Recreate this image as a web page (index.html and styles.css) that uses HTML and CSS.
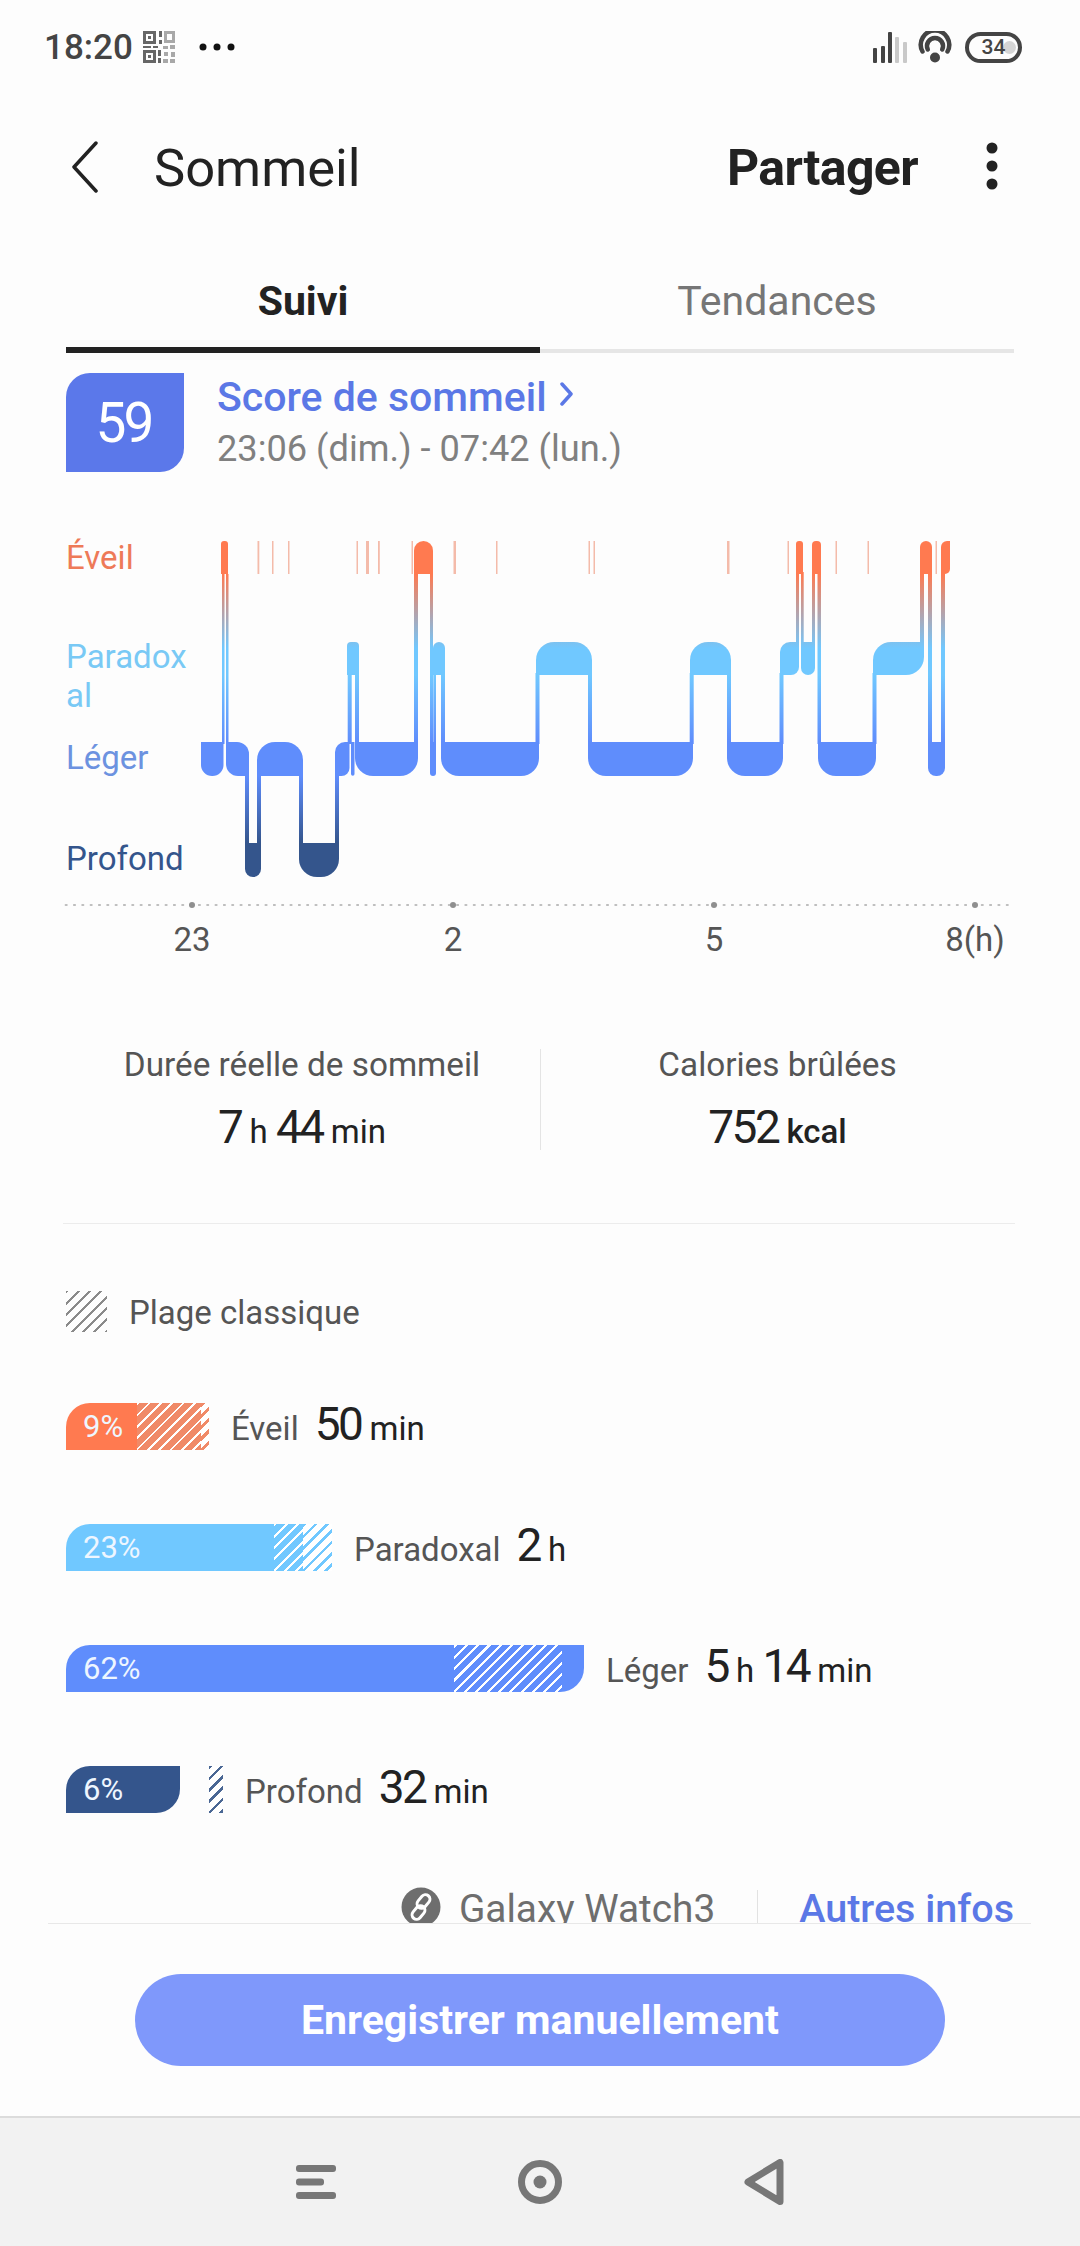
FILE: index.html
```html
<!DOCTYPE html>
<html lang="fr">
<head>
<meta charset="utf-8">
<title>Sommeil</title>
<link rel="stylesheet" href="styles.css">
</head>
<body>
<div class="app">
  <div class="status">
    <span class="time">18:20</span>
    <svg class="qr" viewBox="0 0 32 32" width="32" height="32">
      <g class="qr-dark">
        <path d="M0 0h13v13H0zM3 3v7h7V3zM5 5h3v3H5z" fill-rule="evenodd"/>
        <path d="M0 19h13v13H0zM3 22v7h7v-7zM5 24h3v3H5z" fill-rule="evenodd"/>
        <path d="M16 0h3v6h-3zM16 9h3v4h-3zM0 15h8v2H0zM10 15h5v2h-5zM15 19h3v6h-3zM15 27h3v5h-3z"/>
      </g>
      <g class="qr-light">
        <path d="M21 0h11v12H21zM24 3v6h5V3z" fill-rule="evenodd"/>
        <path d="M20 15h5v3h-5zM27 14h5v4h-5zM21 21h4v4h-4zM28 21h4v5h-4zM20 28h5v4h-5zM27 28h5v4h-5z"/>
      </g>
    </svg>
    <svg class="more" viewBox="0 0 36 8" width="36" height="8">
      <circle cx="4" cy="4" r="3.5"/><circle cx="18" cy="4" r="3.5"/><circle cx="32" cy="4" r="3.5"/>
    </svg>
    <span class="status-gap"></span>
    <svg class="signal" viewBox="0 0 34 31" width="34" height="31">
      <rect class="bar-on" x="0" y="16" width="4" height="15" rx="1"/>
      <rect class="bar-on" x="8" y="14" width="4" height="17" rx="1"/>
      <rect class="bar-on" x="15" y="0" width="4" height="31" rx="1"/>
      <rect class="bar-off" x="22" y="5" width="4" height="26" rx="1"/>
      <rect class="bar-off" x="30" y="10" width="4" height="21" rx="1"/>
    </svg>
    <svg class="wifi" viewBox="0 0 34 32" width="34" height="32">
      <path d="M4.500 20.500A14.200 14.200 0 1 1 29.500 20.500"/>
      <path d="M9.800 18.500A8 8 0 1 1 24.200 18.500"/>
      <circle cx="17" cy="26.500" r="5"/>
    </svg>
    <div class="battery"><span class="battery-level"></span><span class="battery-num">34</span></div>
  </div>

  <header class="appbar">
    <svg class="back" viewBox="0 0 26 52" width="26" height="52"><path d="M24 2 2 26l22 24"/></svg>
    <h1 class="title">Sommeil</h1>
    <span class="share">Partager</span>
    <svg class="kebab" viewBox="0 0 12 48" width="12" height="48">
      <circle cx="6" cy="6" r="5.500"/><circle cx="6" cy="24" r="5.500"/><circle cx="6" cy="42" r="5.500"/>
    </svg>
  </header>

  <nav class="tabs">
    <div class="tab tab-active">Suivi</div>
    <div class="tab">Tendances</div>
  </nav>

  <main class="content">
    <section class="score">
      <div class="badge">59</div>
      <div class="score-text">
        <div class="score-title">Score de sommeil
          <svg class="score-chev" viewBox="0 0 14 24" width="14" height="24"><path d="M3 2l9 10-9 10"/></svg>
        </div>
        <div class="score-time">23:06 (dim.) - 07:42 (lun.)</div>
      </div>
    </section>

    <section class="chart">
      <div class="levels">
        <div class="lv lv-wake">Éveil</div>
        <div class="lv lv-rem">Paradoxal</div>
        <div class="lv lv-light">Léger</div>
        <div class="lv lv-deep">Profond</div>
      </div>
      <svg class="hypno" viewBox="190 535 800 350" width="800" height="350">
        <defs>
          <linearGradient id="stage" gradientUnits="userSpaceOnUse" x1="0" y1="541" x2="0" y2="877">
            <stop offset="0" stop-color="#ff7a50"/>
            <stop offset=".098" stop-color="#ff7a50"/>
            <stop offset=".32" stop-color="#70c8ff"/>
            <stop offset=".399" stop-color="#70c8ff"/>
            <stop offset=".598" stop-color="#5f8dfc"/>
            <stop offset=".699" stop-color="#5f8dfc"/>
            <stop offset=".899" stop-color="#34558c"/>
            <stop offset="1" stop-color="#34558c"/>
          </linearGradient>
        </defs>
        <g class="faint">
          <rect x="257.500" y="541" width="1.800" height="33"/>
          <rect x="272" y="541" width="1.500" height="33"/>
          <rect x="288" y="541" width="1.500" height="33"/>
          <rect x="356.500" y="541" width="1.500" height="33"/>
          <rect x="366" y="541" width="3" height="33"/>
          <rect x="378" y="541" width="1.800" height="33"/>
          <rect x="411.500" y="541" width="1.500" height="33"/>
          <rect x="453.500" y="541" width="2.500" height="33"/>
          <rect x="496" y="541" width="1.500" height="33"/>
          <rect x="588.500" y="541" width="1.500" height="33"/>
          <rect x="593.500" y="541" width="1.500" height="33"/>
          <rect x="727" y="541" width="2.500" height="33"/>
          <rect x="787.500" y="541" width="1.500" height="33"/>
          <rect x="835.500" y="541" width="1.500" height="33"/>
          <rect x="867.500" y="541" width="1.500" height="33"/>
          <rect x="935.500" y="541" width="1.500" height="33"/>
        </g>
        <g class="stages">
          <!-- connectors -->
          <rect x="222" y="574" width="2.500" height="170"/>
          <rect x="226" y="574" width="2.500" height="170"/>
          <rect x="245" y="774" width="4" height="71"/>
          <rect x="257" y="774" width="4" height="71"/>
          <rect x="299" y="774" width="4" height="71"/>
          <rect x="335" y="774" width="4" height="71"/>
          <rect x="347.700" y="673" width="4" height="71"/>
          <rect x="355" y="673" width="4" height="71"/>
          <rect x="414" y="572" width="4" height="172"/>
          <rect x="430" y="572" width="3" height="172"/>
          <rect x="433.300" y="673" width="2.700" height="71"/>
          <rect x="441" y="673" width="4" height="71"/>
          <rect x="535.500" y="673" width="4" height="71"/>
          <rect x="588" y="673" width="4" height="71"/>
          <rect x="689.700" y="673" width="4" height="71"/>
          <rect x="727" y="673" width="4" height="71"/>
          <rect x="779.500" y="673" width="4" height="71"/>
          <rect x="796" y="572" width="3" height="72"/>
          <rect x="801" y="572" width="2.700" height="72"/>
          <rect x="812" y="572" width="3" height="72"/>
          <rect x="817.500" y="572" width="3.500" height="172"/>
          <rect x="872.500" y="673" width="4" height="71"/>
          <rect x="920" y="572" width="4" height="72"/>
          <rect x="928" y="572" width="4" height="172"/>
          <rect x="941" y="572" width="4" height="172"/>
          <!-- blocks -->
          <path d="M221 574V544A3 3 0 0 1 224 541H225A3 3 0 0 1 228 544V574Z"/>
          <path d="M201 742H223.500V765A11 11 0 0 1 212.500 776H212A11 11 0 0 1 201 765Z"/>
          <path d="M226 742H237A12 12 0 0 1 249 754V776H238A12 12 0 0 1 226 764Z"/>
          <path d="M245 843H261V869A8 8 0 0 1 253 877A8 8 0 0 1 245 869Z"/>
          <path d="M257 776V760A18 18 0 0 1 275 742H285A18 18 0 0 1 303 760V776Z"/>
          <path d="M299 843H339V859A18 18 0 0 1 321 877H317A18 18 0 0 1 299 859Z"/>
          <path d="M335 776V752A10 10 0 0 1 345 742H349.500V768A8 8 0 0 1 341.500 776Z"/>
          <path d="M351 742H354.500V774A1.750 1.750 0 0 1 351 774Z"/>
          <path d="M347 675V646A4 4 0 0 1 351 642H355A4 4 0 0 1 359 646V675Z"/>
          <path d="M355 742H418V758A18 18 0 0 1 400 776H373A18 18 0 0 1 355 758Z"/>
          <path d="M414 574V550.500A9.500 9.500 0 0 1 433 550.500V574Z"/>
          <path d="M430 742H436V773A3 3 0 0 1 430 773Z"/>
          <path d="M433 675V648A6 6 0 0 1 439 642A6 6 0 0 1 445 648V675Z"/>
          <path d="M441 742H539V758A18 18 0 0 1 521 776H459A18 18 0 0 1 441 758Z"/>
          <path d="M536 675V660A18 18 0 0 1 554 642H574A18 18 0 0 1 592 660V675Z"/>
          <path d="M588 742H693V758A18 18 0 0 1 675 776H606A18 18 0 0 1 588 758Z"/>
          <path d="M690 675V660A18 18 0 0 1 708 642H713A18 18 0 0 1 731 660V675Z"/>
          <path d="M727 742H783V758A18 18 0 0 1 765 776H745A18 18 0 0 1 727 758Z"/>
          <path d="M780 675V652A10 10 0 0 1 790 642H799V667A8 8 0 0 1 791 675Z"/>
          <path d="M796 574V544A3 3 0 0 1 799 541H800A3 3 0 0 1 803 544V574Z"/>
          <path d="M801 642H815V668A7 7 0 0 1 801 668Z"/>
          <path d="M812 574V545A4 4 0 0 1 816 541H817A4 4 0 0 1 821 545V574Z"/>
          <path d="M818 742H876V758A18 18 0 0 1 858 776H836A18 18 0 0 1 818 758Z"/>
          <path d="M873 675V660A18 18 0 0 1 891 642H924V657A18 18 0 0 1 906 675Z"/>
          <path d="M920 574V547A6 6 0 0 1 926 541A6 6 0 0 1 932 547V574Z"/>
          <path d="M928 742H945V768A8 8 0 0 1 937 776H936A8 8 0 0 1 928 768Z"/>
          <path d="M941 574V547A6 6 0 0 1 947 541H950V569A5 5 0 0 1 945 574Z"/>
        </g>
      </svg>
    </section>

    <div class="axis-line">
      <span class="tick"></span><span class="tick"></span><span class="tick"></span><span class="tick"></span>
    </div>
    <div class="axis-labels">
      <span>23</span><span>2</span><span>5</span><span>8(h)</span>
    </div>

    <section class="stats">
      <div class="stat">
        <div class="stat-label">Durée réelle de sommeil</div>
        <div class="stat-value"><span class="num">7</span> <span class="unit">h</span> <span class="num">44</span> <span class="unit">min</span></div>
      </div>
      <div class="stat-div"></div>
      <div class="stat">
        <div class="stat-label">Calories brûlées</div>
        <div class="stat-value"><span class="num">752</span> <span class="unit unit-strong">kcal</span></div>
      </div>
    </section>

    <div class="rule"></div>

    <div class="legend">
      <span class="swatch"></span>
      <span class="legend-text">Plage classique</span>
    </div>

    <div class="row row-wake">
      <div class="track track-wake">
        <div class="seg seg-fill seg-wake-solid">9%</div>
        <div class="seg seg-wake-over"></div>
        <div class="seg seg-wake-out"></div>
      </div>
      <div class="row-text"><span class="row-name">Éveil</span><span class="num">50</span> <span class="unit">min</span></div>
    </div>

    <div class="row">
      <div class="track track-rem">
        <div class="seg seg-fill seg-rem-solid">23%</div>
        <div class="seg seg-rem-over"></div>
        <div class="seg seg-rem-out"></div>
      </div>
      <div class="row-text"><span class="row-name">Paradoxal</span><span class="num">2</span> <span class="unit">h</span></div>
    </div>

    <div class="row">
      <div class="track track-light">
        <div class="seg seg-fill seg-light-solid">62%</div>
        <div class="seg seg-light-over"></div>
        <div class="seg seg-light-tail"></div>
      </div>
      <div class="row-text"><span class="row-name">Léger</span><span class="num">5</span> <span class="unit">h</span> <span class="num">14</span> <span class="unit">min</span></div>
    </div>

    <div class="row">
      <div class="track track-deep">
        <div class="seg seg-fill seg-deep-solid">6%</div>
      </div>
      <div class="deep-range"></div>
      <div class="row-text"><span class="row-name">Profond</span><span class="num">32</span> <span class="unit">min</span></div>
    </div>

    <div class="source">
      <svg class="link" viewBox="0 0 40 40" width="40" height="40">
        <circle class="link-bg" cx="20" cy="20" r="19.500"/>
        <g class="link-chain">
          <rect x="18" y="7" width="9" height="15" rx="4.500" transform="rotate(40 22.500 14.500)"/>
          <rect x="13" y="18" width="9" height="15" rx="4.500" transform="rotate(40 17.500 25.500)"/>
        </g>
      </svg>
      <span class="source-name">Galaxy Watch3</span>
      <span class="source-div"></span>
      <span class="source-more">Autres infos</span>
    </div>
  </main>
  <div class="clip-line"></div>

  <div class="action"><button class="manual">Enregistrer manuellement</button></div>

  <footer class="navbar">
    <svg viewBox="0 0 40 34" width="40" height="34" class="nav-icon">
      <rect x="0" y="0" width="40" height="7" rx="3"/>
      <rect x="0" y="13.500" width="28" height="7" rx="3"/>
      <rect x="0" y="27" width="40" height="7" rx="3"/>
    </svg>
    <svg viewBox="0 0 44 44" width="44" height="44" class="nav-icon">
      <circle class="nav-ring" cx="22" cy="22" r="18.500"/>
      <circle cx="22" cy="22" r="6.500"/>
    </svg>
    <svg viewBox="0 0 40 46" width="40" height="46" class="nav-icon">
      <path class="nav-ring" d="M36 3.500V42.500L4 23Z"/>
    </svg>
  </footer>
</div>
</body>
</html>
```

FILE: styles.css
```css
* { box-sizing: border-box; }
html, body { margin: 0; padding: 0; }
body {
  width: 1080px;
  height: 2246px;
  overflow: hidden;
  background: #fdfdfd;
  font-family: Roboto, "Liberation Sans", sans-serif;
  color: #222;
}
.app { display: flex; flex-direction: column; width: 1080px; height: 2246px; }

/* status bar */
.status {
  flex: none;
  height: 94px;
  display: flex;
  align-items: center;
  padding: 0 58px 0 44px;
}
.time { font-size: 35px; font-weight: 500; color: #444; }
.qr { margin-left: 10px; }
.qr-dark { fill: #666; }
.qr-light { fill: #a8a8a8; }
.more { margin-left: 24px; fill: #111; }
.status-gap { flex: 1; }
.signal { margin-right: 11px; }
.bar-on { fill: #444; }
.bar-off { fill: #c9c9c9; }
.wifi { margin-right: 13px; fill: #444; }
.wifi path { fill: none; stroke: #444; stroke-width: 4.500px; stroke-linecap: round; }
.battery {
  position: relative;
  width: 57px;
  height: 31px;
  border: 4px solid #444;
  border-radius: 16px;
  display: flex;
  align-items: center;
  justify-content: center;
}
.battery-level {
  position: absolute;
  left: 34px;
  top: 5px;
  width: 13px;
  height: 13px;
  border-radius: 50%;
  background: #d5d5d5;
}
.battery-num { position: relative; font-size: 21px; font-weight: 500; color: #444; }

/* app bar */
.appbar {
  flex: none;
  height: 148px;
  display: flex;
  align-items: center;
  padding: 0 82px 0 72px;
}
.back { margin-bottom: 3px; fill: none; stroke: #222; stroke-width: 3.500px; stroke-linecap: round; stroke-linejoin: round; }
.title { flex: 1; margin: 0 0 0 56px; font-size: 52.500px; font-weight: 400; color: #222; line-height: 60px; }
.share { font-size: 50px; font-weight: 700; letter-spacing: -.6px; color: #222; line-height: 60px; }
.kebab { margin: 0 0 4px 68px; fill: #222; }

/* tabs */
.tabs { flex: none; display: flex; margin: 0 66px; height: 111px; }
.tab {
  flex: 1;
  height: 111px;
  padding-top: 35px;
  text-align: center;
  font-size: 41px;
  line-height: 48px;
  color: #767676;
  border-bottom: 4px solid #e6e6e6;
}
.tab-active { color: #222; font-weight: 700; border-bottom: 6px solid #222; }

/* scrolling content */
.content { flex: none; height: 1570px; overflow: hidden; padding: 20px 0 0 66px; }

.score { display: flex; height: 99px; }
.badge {
  width: 118px;
  height: 99px;
  background: #5b78ea;
  border-radius: 24px 0 24px 0;
  color: #fff;
  font-size: 55px;
  letter-spacing: -3px;
  padding-right: 3px;
  display: flex;
  align-items: center;
  justify-content: center;
}
.score-text { margin-left: 33px; }
.score-title { font-size: 41px; font-weight: 500; line-height: 48px; color: #5b78e6; display: flex; align-items: center; }
.score-chev { margin-left: 12px; margin-top: -6px; fill: none; stroke: #5b78e6; stroke-width: 3.500px; stroke-linecap: round; stroke-linejoin: round; }
.score-time { margin-top: 6px; font-size: 36.200px; line-height: 44px; color: #808080; }

.chart { display: flex; margin-top: 63px; height: 350px; }
.levels { width: 124px; padding-top: 3px; font-size: 33px; line-height: 39px; }
.lv { width: 124px; word-break: break-all; }
.lv-wake { color: #ee7a58; }
.lv-rem { margin-top: 60px; color: #79c9f5; }
.lv-light { margin-top: 23px; color: #6c92e0; }
.lv-deep { margin-top: 62px; color: #34558c; }
.faint { fill: #f2a68f; opacity: .75; }
.stages { fill: url(#stage); }

.axis-line {
  display: grid;
  grid-template-columns: repeat(4, 261px);
  justify-items: center;
  align-items: center;
  margin: 17px 0 0 -4.500px;
  width: 948px;
  height: 6px;
  background: radial-gradient(circle, #bdbdbd 1px, transparent 1.500px) 0 0 / 8.330px 6px repeat-x;
}
.tick { width: 6px; height: 6px; border-radius: 50%; background: #8f8f8f; }
.axis-labels {
  display: grid;
  grid-template-columns: repeat(4, 261px);
  justify-items: center;
  margin: 13px 0 0 -4.500px;
  font-size: 33px;
  line-height: 38px;
  color: #555;
}

/* totals */
.stats { display: grid; grid-template-columns: 476px 1px 473px; margin: 87px 0 0 -2px; height: 102px; }
.stat { text-align: center; height: 102px; }
.stat-div { width: 1px; height: 101px; margin-top: 3px; background: #e4e4e4; }
.stat-label { font-size: 33.300px; line-height: 38px; color: #555; }
.stat-value { margin-top: 20px; font-size: 33px; line-height: 46px; color: #222; white-space: nowrap; }
.num { font-size: 46px; letter-spacing: -2.500px; }
.unit { font-size: 33px; }
.unit-strong { font-weight: 500; }

.rule { width: 952px; height: 1px; margin: 75px 0 0 -3px; background: #ececec; }

.legend { display: flex; align-items: center; gap: 22px; margin-top: 67px; height: 41px; }
.swatch {
  width: 41px;
  height: 41px;
  background: repeating-linear-gradient(135deg, #8a8a8a 0 2px, transparent 2px 8px);
}
.legend-text { padding-top: 2px; font-size: 33px; color: #555; }

/* stage rows */
.row { display: flex; height: 47px; margin-top: 74px; }
.row-wake { margin-top: 71px; }
.track { display: flex; height: 47px; overflow: hidden; border-radius: 24px 0 0 0; flex: none; }
.seg { height: 47px; flex: none; }
.seg-fill { padding-left: 17px; color: #eef6ff; font-size: 31px; line-height: 47px; }

.track-wake { width: 143px; }
.seg-wake-solid { width: 71px; background: #ff7a50; }
.seg-wake-over { width: 64px; background: repeating-linear-gradient(135deg, #fff 0 1.800px, #f08a68 1.800px 8px); }
.seg-wake-out { width: 8px; background: repeating-linear-gradient(135deg, #f08a68 0 3px, #fff 3px 8px); }

.track-rem { width: 266px; }
.seg-rem-solid { width: 208px; background: #70c8ff; }
.seg-rem-over { width: 29px; background: repeating-linear-gradient(135deg, #fff 0 2px, #70c8ff 2px 8px); }
.seg-rem-out { width: 29px; background: repeating-linear-gradient(135deg, #70c8ff 0 2.500px, #fff 2.500px 8px); }

.track-light { width: 518px; border-radius: 24px 0 24px 0; }
.seg-light-solid { width: 388px; background: #5f8dfc; }
.seg-light-over { width: 108px; background: repeating-linear-gradient(135deg, #fff 0 2.200px, #5f8dfc 2.200px 8px); }
.seg-light-tail { width: 22px; background: #5f8dfc; }

.track-deep { width: 114px; border-radius: 24px 0 24px 0; }
.seg-deep-solid { width: 114px; background: #34558c; }
.deep-range {
  width: 14px;
  height: 47px;
  margin-left: 29px;
  background: repeating-linear-gradient(135deg, #4a6794 0 2.500px, #fff 2.500px 8px);
}

.row-text { margin: -2px 0 0 22px; font-size: 33px; line-height: 47px; white-space: nowrap; color: #222; }
.row-name { font-size: 33px; color: #555; margin-right: 16px; }

/* source line */
.source { display: flex; align-items: flex-start; justify-content: flex-end; margin-top: 74px; padding-right: 66px; }
.link { flex: none; }
.link-bg { fill: #6e6e6e; }
.link-chain { fill: none; stroke: #fff; stroke-width: 3px; }
.source-name { margin-left: 18px; font-size: 38.800px; line-height: 44px; color: #6e6e6e; }
.source-div { width: 1px; height: 36px; margin: 3px 41px 0 42px; background: #e2e2e2; }
.source-more { font-size: 39.500px; font-weight: 500; line-height: 44px; color: #5b78e6; }

.clip-line { flex: none; height: 1px; margin: 0 49px 0 48px; background: #e8e8e8; }

/* action + nav */
.action { flex: none; display: flex; justify-content: center; margin-top: 50px; }
.manual {
  width: 810px;
  height: 92px;
  border: 0;
  border-radius: 46px;
  background: #7f98fb;
  color: #fff;
  font-family: inherit;
  font-size: 41px;
  font-weight: 700;
}
.navbar {
  flex: none;
  margin-top: 50px;
  height: 130px;
  background: #f2f2f2;
  border-top: 2px solid #dcdcdc;
  display: grid;
  grid-template-columns: repeat(3, 224px);
  justify-content: center;
  justify-items: center;
  align-items: center;
}
.nav-icon { fill: #777; }
.nav-ring { fill: none; stroke: #777; stroke-width: 7px; stroke-linejoin: round; }
```
